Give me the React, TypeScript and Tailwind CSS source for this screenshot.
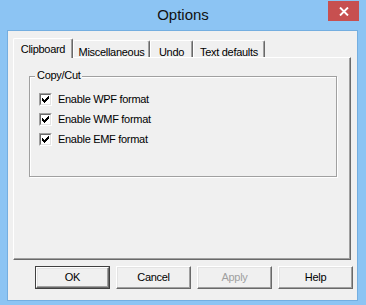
import React from "react";

const font = "font-['Liberation_Sans',Arial,sans-serif] text-[11px] tracking-[-0.3px] text-black";

function Check() {
  return (
    <div className="w-[13px] h-[13px] border border-t-[#a0a0a0] border-l-[#a0a0a0] border-r-white border-b-white">
      <div className="w-full h-full bg-white border border-t-[#696969] border-l-[#696969] border-r-[#e3e3e3] border-b-[#e3e3e3] flex items-center justify-center">
        <svg width="7" height="7" viewBox="0 0 7 7" shapeRendering="crispEdges">
          <polygon points="0,2 2,4 7,-1 7,2 2,7 0,5" fill="#000" />
        </svg>
      </div>
    </div>
  );
}

function Btn({ label, def, disabled }: { label: string; def?: boolean; disabled?: boolean }) {
  const inner = (
    <div
      className={`w-full h-full flex items-center justify-center bg-[#f0f0f0] border border-t-white border-l-white border-r-[#696969] border-b-[#696969] shadow-[inset_-1px_-1px_0_#a0a0a0,inset_1px_1px_0_#e3e3e3] ${
        disabled ? "text-[#a0a0a0]" : "text-black"
      }`}
    >
      {label}
    </div>
  );
  return (
    <div className={`w-[75px] h-[23px] ${def ? "border border-[#404040]" : ""}`}>{inner}</div>
  );
}

export default function App() {
  const tabs = [
    { label: "Miscellaneous", w: "w-[77px]" },
    { label: "Undo", w: "w-[43px]" },
    { label: "Text defaults", w: "w-[72px]" },
  ];
  const items = ["Enable WPF format", "Enable WMF format", "Enable EMF format"];
  return (
    <div className={`w-[366px] h-[305px] bg-[#8cc4f3] flex flex-col pl-[7px] pr-[8px] pb-[4px] ${font}`}>
      <div className="h-[30px] grid grid-cols-[1fr_auto_1fr] items-start -ml-[7px] -mr-[8px]">
        <div />
        <div className="text-[15px] tracking-normal text-[#111] pt-[6px] leading-[18px]">Options</div>
        <div className="flex justify-end pr-[7px] pt-px">
          <div className="w-[31px] h-[20px] bg-[#c75050] flex items-center justify-center">
            <svg width="10" height="9" viewBox="0 0 10 9">
              <path d="M1 0.5 L9 8.5 M9 0.5 L1 8.5" stroke="#fff" strokeWidth="1.9" />
            </svg>
          </div>
        </div>
      </div>
      <div className="flex-1 border border-[#74aee0] bg-[#f0f0f0] flex flex-col pl-[5px] pr-[4px] pt-[7px] pb-[9px]">
        <div className="flex items-end h-[19px]">
          <div className="relative z-10 w-[60px] h-[20px] -mb-px bg-[#f0f0f0] border-t border-l border-t-white border-l-white border-r border-r-[#696969] shadow-[inset_-1px_0_0_#a0a0a0] flex justify-center pt-[2px] rounded-t-[2px]">
            Clipboard
          </div>
          {tabs.map((t) => (
            <div
              key={t.label}
              className={`${t.w} h-[17px] border-t border-l border-t-white border-l-white border-r border-r-[#696969] shadow-[inset_-1px_0_0_#a0a0a0] flex justify-center pt-[3px] rounded-t-[2px]`}
            >
              {t.label}
            </div>
          ))}
        </div>
        <div className="h-[203px] w-[338px] border border-t-white border-l-white border-r-[#696969] border-b-[#696969] shadow-[inset_-1px_-1px_0_#a0a0a0] pl-[15px] pt-[18px]">
          <div className="relative w-[308px] h-[101px] border border-[#a0a0a0] shadow-[1px_1px_0_#fff,inset_1px_1px_0_#fff] pl-[9px] pt-[16px] flex flex-col gap-[7px]">
            <div className="absolute left-[5px] -top-[8px] px-[2px] bg-[#f0f0f0] leading-[13px]">Copy/Cut</div>
            {items.map((s) => (
              <div key={s} className="flex items-center gap-[6px] h-[13px]">
                <Check />
                <span className="leading-[13px]">{s}</span>
              </div>
            ))}
          </div>
        </div>
        <div className="flex justify-end gap-[6px] mt-[6px]">
          <Btn label="OK" def />
          <Btn label="Cancel" />
          <Btn label="Apply" disabled />
          <Btn label="Help" />
        </div>
      </div>
    </div>
  );
}
